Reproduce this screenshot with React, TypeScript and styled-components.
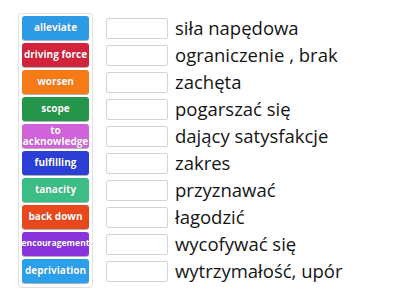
import React from 'react';
import styled, { createGlobalStyle } from 'styled-components';

const GlobalStyle = createGlobalStyle`
   body {
      margin: 0;
      background: #ffffff;
      font-family: 'Open Sans', 'Liberation Sans', sans-serif;
   }
`;

const Page = styled.main`
   display: flex;
   align-items: flex-start;
   padding: 13px 0 0 18px;
`;

const Bank = styled.div`
   display: flex;
   flex-direction: column;
   gap: 2px;
   width: 67px;
   padding: 2px 3px 3px;
   border: 1px solid #e2e2e2;
   border-radius: 3px;
   background: #fff;
`;

const Tile = styled.div<{ $color: string; $size?: number }>`
   display: flex;
   align-items: center;
   justify-content: center;
   height: 24px;
   margin-bottom: 1px;
   border-radius: 3px;
   background: ${(p) => p.$color};
   box-shadow: 0 1px 0 rgba(0, 0, 0, 0.3);
   color: #fff;
   font-size: ${(p) => p.$size ?? 10}px;
   font-weight: 700;
   line-height: 11.5px;
   text-align: center;
   text-shadow: 0 0 1px rgba(0, 0, 0, 0.25);
   white-space: nowrap;
   overflow: hidden;
`;

const Answers = styled.div`
   display: flex;
   flex-direction: column;
   margin-left: 13px;
   padding-top: 5px;
`;

const Row = styled.div`
   display: flex;
   align-items: center;
   height: 27px;
`;

const Slot = styled.div`
   flex: none;
   width: 60px;
   height: 19px;
   border: 1px solid #d4d4d4;
   border-radius: 2px;
   background: #fff;
   margin-top: -6px;
`;

const Definition = styled.span`
   margin-left: 7px;
   margin-top: -8px;
   font-size: 18.5px;
   color: #151515;
   white-space: nowrap;
`;

const tiles = [
   { label: 'alleviate', color: '#2d9ae6' },
   { label: 'driving force', color: '#d2233b' },
   { label: 'worsen', color: '#f67a15' },
   { label: 'scope', color: '#24964b' },
   { label: 'to acknowledge', color: '#d262da' },
   { label: 'fulfilling', color: '#2b3fd6' },
   { label: 'tanacity', color: '#3dbd86' },
   { label: 'back down', color: '#e8481b' },
   { label: 'encouragement', color: '#8a33dc', size: 8.6 },
   { label: 'depriviation', color: '#2a9fec' },
];

const definitions = [
   'siła napędowa',
   'ograniczenie , brak',
   'zachęta',
   'pogarszać się',
   'dający satysfakcje',
   'zakres',
   'przyznawać',
   'łagodzić',
   'wycofywać się',
   'wytrzymałość, upór',
];

const App: React.FC = () => (
   <>
      <GlobalStyle />
      <Page>
         <Bank>
            {tiles.map((t) => (
               <Tile key={t.label} $color={t.color} $size={t.size}>
                  {t.label === 'to acknowledge' ? (
                     <span>
                        to
                        <br />
                        acknowledge
                     </span>
                  ) : (
                     t.label
                  )}
               </Tile>
            ))}
         </Bank>
         <Answers>
            {definitions.map((d) => (
               <Row key={d}>
                  <Slot />
                  <Definition>{d}</Definition>
               </Row>
            ))}
         </Answers>
      </Page>
   </>
);

export default App;
